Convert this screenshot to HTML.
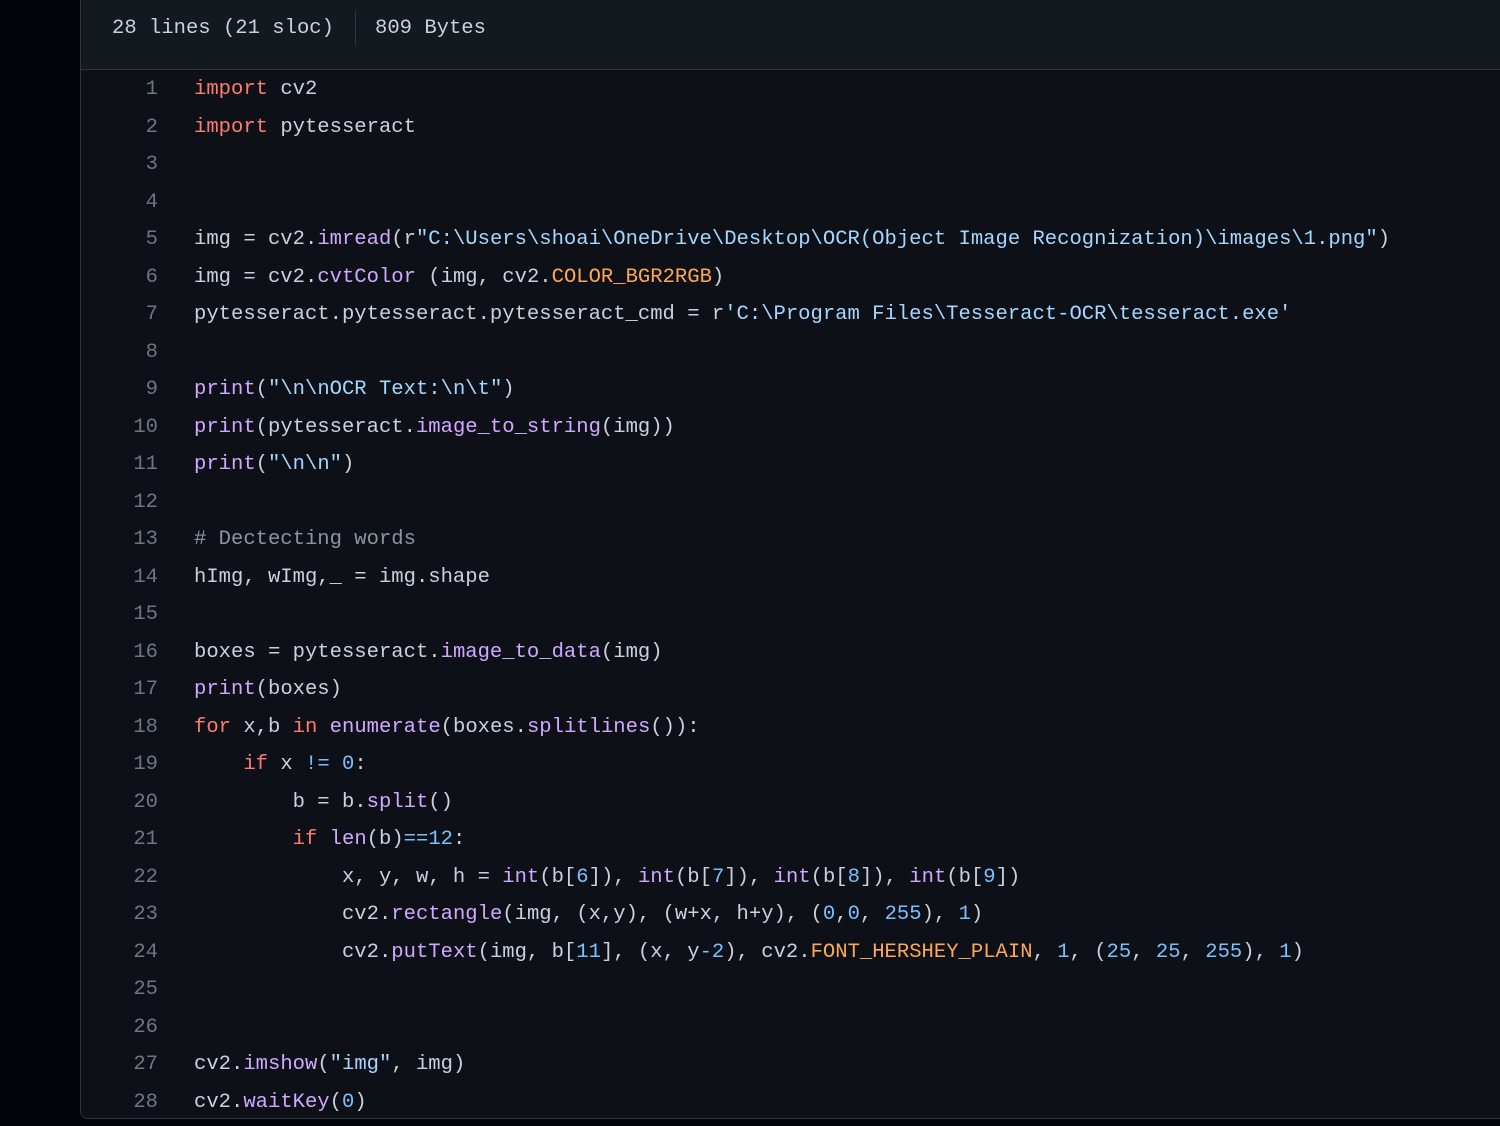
<!DOCTYPE html>
<html><head><meta charset="utf-8"><style>
html,body{margin:0;padding:0;background:#010409;width:1500px;height:1126px;overflow:hidden}
.panel{position:absolute;left:80px;top:-10px;width:1440px;height:1127px;border:1px solid #30363d;border-radius:8px;background:#0d1117;overflow:hidden}
.hdr{position:absolute;left:0;top:0;width:100%;height:78px;background:#14181f;border-bottom:1px solid #30363d}
.m{font-family:"Liberation Mono",monospace;font-size:20.55px;color:#c9d1d9;white-space:pre}
.h1{position:absolute;left:31px;top:26px}
.h2{position:absolute;left:294px;top:26px}
.sep{position:absolute;left:274px;top:20px;width:1px;height:34px;background:#30363d}
.ln{position:absolute;left:0;width:77px;text-align:right;color:#6e7681}
.code{position:absolute;left:113px}
.k{color:#ff7b72}.f{color:#d2a8ff}.s{color:#a5d6ff}.c{color:#79c0ff}.o{color:#ffa657}.cm{color:#8b949e}
</style></head><body>
<div class="panel">
<div class="hdr"><div class="m h1">28 lines (21 sloc)</div><div class="sep"></div><div class="m h2">809 Bytes</div></div>
</div>
<div style="position:absolute;left:81px;top:-7px">
<div class="m ln" style="top:85px">1</div><div class="m code" style="top:85px"><span class="k">import</span> cv2</div>
<div class="m ln" style="top:122.5px">2</div><div class="m code" style="top:122.5px"><span class="k">import</span> pytesseract</div>
<div class="m ln" style="top:160px">3</div>
<div class="m ln" style="top:197.5px">4</div>
<div class="m ln" style="top:235px">5</div><div class="m code" style="top:235px">img = cv2.<span class="f">imread</span>(r<span class="s">"C:\Users\shoai\OneDrive\Desktop\OCR(Object Image Recognization)\images\1.png"</span>)</div>
<div class="m ln" style="top:272.5px">6</div><div class="m code" style="top:272.5px">img = cv2.<span class="f">cvtColor</span> (img, cv2.<span class="o">COLOR_BGR2RGB</span>)</div>
<div class="m ln" style="top:310px">7</div><div class="m code" style="top:310px">pytesseract.pytesseract.pytesseract_cmd = r<span class="s">'C:\Program Files\Tesseract-OCR\tesseract.exe'</span></div>
<div class="m ln" style="top:347.5px">8</div>
<div class="m ln" style="top:385px">9</div><div class="m code" style="top:385px"><span class="f">print</span>(<span class="s">"\n\nOCR Text:\n\t"</span>)</div>
<div class="m ln" style="top:422.5px">10</div><div class="m code" style="top:422.5px"><span class="f">print</span>(pytesseract.<span class="f">image_to_string</span>(img))</div>
<div class="m ln" style="top:460px">11</div><div class="m code" style="top:460px"><span class="f">print</span>(<span class="s">"\n\n"</span>)</div>
<div class="m ln" style="top:497.5px">12</div>
<div class="m ln" style="top:535px">13</div><div class="m code cm" style="top:535px"># Dectecting words</div>
<div class="m ln" style="top:572.5px">14</div><div class="m code" style="top:572.5px">hImg, wImg,_ = img.shape</div>
<div class="m ln" style="top:610px">15</div>
<div class="m ln" style="top:647.5px">16</div><div class="m code" style="top:647.5px">boxes = pytesseract.<span class="f">image_to_data</span>(img)</div>
<div class="m ln" style="top:685px">17</div><div class="m code" style="top:685px"><span class="f">print</span>(boxes)</div>
<div class="m ln" style="top:722.5px">18</div><div class="m code" style="top:722.5px"><span class="k">for</span> x,b <span class="k">in</span> <span class="f">enumerate</span>(boxes.<span class="f">splitlines</span>()):</div>
<div class="m ln" style="top:760px">19</div><div class="m code" style="top:760px">    <span class="k">if</span> x <span class="c">!=</span> <span class="c">0</span>:</div>
<div class="m ln" style="top:797.5px">20</div><div class="m code" style="top:797.5px">        b = b.<span class="f">split</span>()</div>
<div class="m ln" style="top:835px">21</div><div class="m code" style="top:835px">        <span class="k">if</span> <span class="f">len</span>(b)<span class="c">==12</span>:</div>
<div class="m ln" style="top:872.5px">22</div><div class="m code" style="top:872.5px">            x, y, w, h = <span class="f">int</span>(b[<span class="c">6</span>]), <span class="f">int</span>(b[<span class="c">7</span>]), <span class="f">int</span>(b[<span class="c">8</span>]), <span class="f">int</span>(b[<span class="c">9</span>])</div>
<div class="m ln" style="top:910px">23</div><div class="m code" style="top:910px">            cv2.<span class="f">rectangle</span>(img, (x,y), (w+x, h+y), (<span class="c">0</span>,<span class="c">0</span>, <span class="c">255</span>), <span class="c">1</span>)</div>
<div class="m ln" style="top:947.5px">24</div><div class="m code" style="top:947.5px">            cv2.<span class="f">putText</span>(img, b[<span class="c">11</span>], (x, y<span class="c">-2</span>), cv2.<span class="o">FONT_HERSHEY_PLAIN</span>, <span class="c">1</span>, (<span class="c">25</span>, <span class="c">25</span>, <span class="c">255</span>), <span class="c">1</span>)</div>
<div class="m ln" style="top:985px">25</div>
<div class="m ln" style="top:1022.5px">26</div>
<div class="m ln" style="top:1060px">27</div><div class="m code" style="top:1060px">cv2.<span class="f">imshow</span>(<span class="s">"img"</span>, img)</div>
<div class="m ln" style="top:1097.5px">28</div><div class="m code" style="top:1097.5px">cv2.<span class="f">waitKey</span>(<span class="c">0</span>)</div>
</div>
</body></html>
